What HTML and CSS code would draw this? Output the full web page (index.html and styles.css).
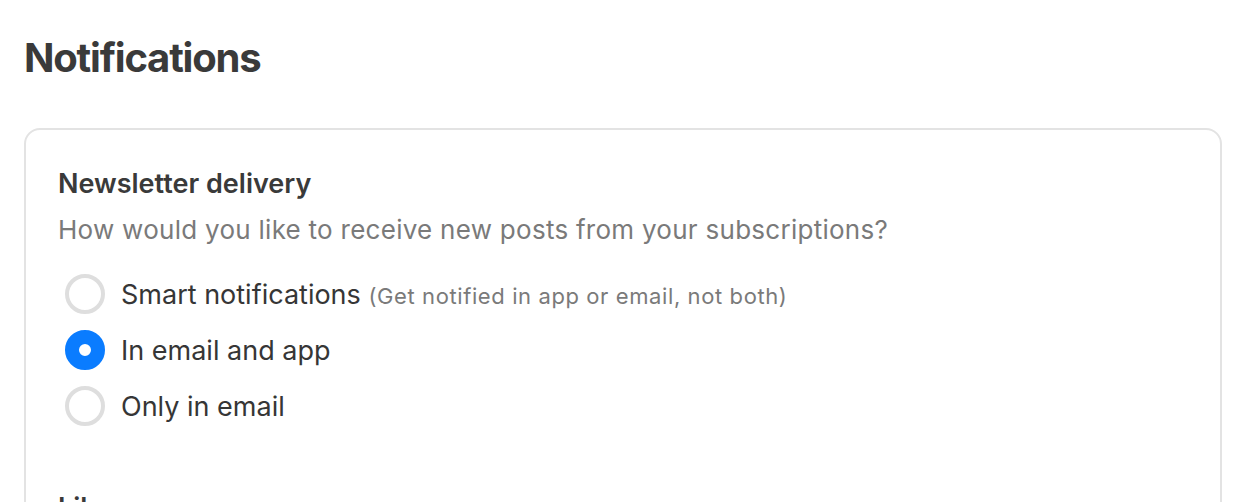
FILE: index.html
```html
<!DOCTYPE html>
<html lang="en">
<head>
  <meta charset="UTF-8">
  <title>Notifications</title>
  <link rel="stylesheet" href="styles.css">
</head>
<body>
  <div class="page">
    <h1>Notifications</h1>

    <div class="card">
      <!-- Newsletter delivery -->
      <section class="group">
        <h2>Newsletter delivery</h2>
        <p class="hint">How would you like to receive new posts from your subscriptions?</p>
        <ul class="options">
          <li class="option">
            <span class="radio"></span>
            <span class="label">Smart notifications <span class="note">(Get notified in app or email, not both)</span></span>
          </li>
          <li class="option">
            <span class="radio checked"></span>
            <span class="label">In email and app</span>
          </li>
          <li class="option">
            <span class="radio"></span>
            <span class="label">Only in email</span>
          </li>
        </ul>
      </section>

      <section class="group">
        <h2>Likes</h2>
      </section>
    </div>
  </div>
</body>
</html>
```

FILE: styles.css
```css
body {
  margin: 0;
  font-family: Inter, "Noto Sans", sans-serif;
  color: #363636;
  background: #fff;
  overflow: hidden;
}
.page {
  padding: 30px 34px 0 24px;
}
h1 {
  margin: 0;
  font-size: 40px;
  font-weight: 700;
  line-height: 56px;
  letter-spacing: -1.2px;
  color: #3a3a3a;
}
.card {
  margin-top: 42px;
  border: 2px solid #e3e3e3;
  border-radius: 16px;
  padding: 36px 32px;
}
.group h2 {
  margin: 0;
  font-size: 27px;
  font-weight: 600;
  line-height: 36px;
  color: #3a3a3a;
}
.hint {
  margin: 10px 0 0;
  font-size: 26px;
  line-height: 36px;
  letter-spacing: 0.27px;
  color: #7a7a7a;
}
.options {
  list-style: none;
  margin: 18px 0 0;
  padding: 0 0 0 7px;
}
.option {
  display: flex;
  align-items: center;
  gap: 16px;
  height: 56px;
}
.radio {
  width: 32px;
  height: 32px;
  border: 4px solid #dedede;
  border-radius: 50%;
  flex-shrink: 0;
}
.radio.checked {
  border: 14px solid #0a7cff;
  width: 12px;
  height: 12px;
  background: #fff;
}
.label {
  font-size: 27px;
  color: #363636;
}
.note {
  font-size: 22px;
  letter-spacing: 0.6px;
  color: #7a7a7a;
}
.group + .group {
  margin-top: 56px;
}
```
